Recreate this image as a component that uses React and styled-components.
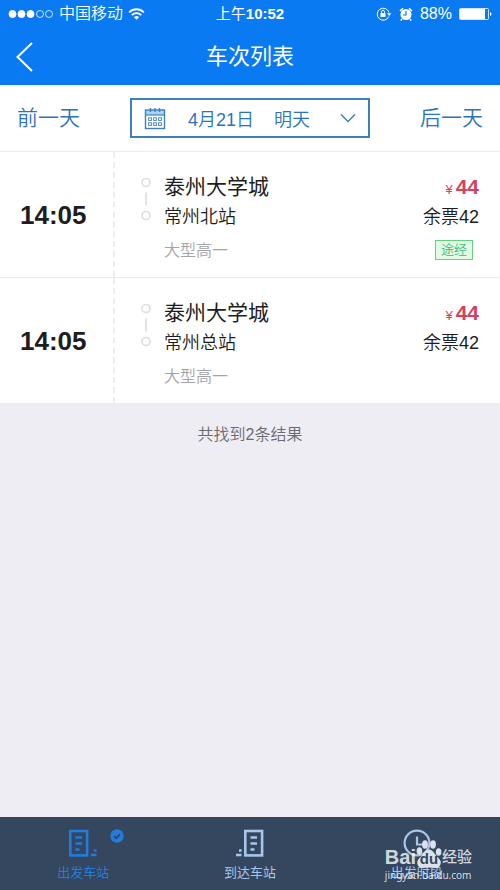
import React, { useState } from "react";
import styled, { createGlobalStyle } from "styled-components";


const GlobalStyle = createGlobalStyle`
    * {
        box-sizing: border-box;
    }
    body {
        margin: 0;
        font-family: "Liberation Sans", "Noto Sans CJK SC", sans-serif;
        font-weight: 350;
        color: #1d1d22;
    }
    button {
        margin: 0;
        padding: 0;
        border: none;
        background: none;
        font: inherit;
        color: inherit;
        cursor: pointer;
    }
    svg {
        display: block;
        flex: none;
    }
`

const Page = styled.div`
    display: flex;
    flex-direction: column;
    min-height: 100vh;
    background-color: #efedf4;
`
const Header = styled.header`
    background-color: #0a7af3;
    color: white;
`
const StatusBar = styled.div`
    display: grid;
    grid-template-columns: 1fr auto 1fr;
    align-items: center;
    height: 28px;
    padding: 0 8px;
    font-size: 16px;
    line-height: 28px;
`
const StatusSide = styled.div`
    display: flex;
    align-items: center;
    justify-content: ${(props) => (props.$right ? "flex-end" : "flex-start")};
    gap: ${(props) => (props.$right ? "7px" : "5px")};
`
const Clock = styled.span`
    font-size: 15px;
    font-weight: 400;
`
const TitleBar = styled.div`
    display: grid;
    grid-template-columns: 50px 1fr 50px;
    align-items: center;
    height: 57px;
`
const BackBtn = styled.button`
    display: flex;
    align-items: center;
    height: 57px;
    padding-left: 16px;
`
const Title = styled.h1`
    margin: 0;
    font-size: 22px;
    font-weight: 400;
    line-height: 57px;
    text-align: center;
`
const DateBar = styled.div`
    display: flex;
    justify-content: space-between;
    align-items: center;
    height: 67px;
    padding: 0 17px;
    background-color: white;
    border-bottom: 1px solid #ebebee;
    color: #2b74b8;
`
const DayBtn = styled.button`
    font-size: 21px;
    line-height: 32px;
`
const DateBtn = styled.button`
    display: flex;
    flex: 1;
    align-items: center;
    height: 40px;
    margin: 0 50px;
    padding: 0 12px;
    border: 2px solid #3d80bd;
    font-size: 18px;
`
const DateText = styled.span`
    display: flex;
    flex: 1;
    gap: 20px;
    padding-left: 22px;
`
const TripList = styled.ul`
    margin: 0;
    padding: 0;
    list-style: none;
`
const TripRow = styled.li`
    display: flex;
    height: 126px;
    background-color: white;
    border-bottom: 1px solid #ebebee;
`
const TimeBox = styled.div`
    display: flex;
    align-items: center;
    width: 115px;
    padding: 2px 0 0 20px;
    border-right: 2px dashed #ededf0;
    font-size: 26px;
    font-weight: 700;
`
const RouteBox = styled.div`
    display: flex;
    flex: 1;
    gap: 12px;
    padding: 20px 0 0 25px;
`
const RouteDots = styled.svg`
    margin-top: 4px;
`
const From = styled.div`
    font-size: 21px;
    font-weight: 400;
    line-height: 30px;
`
const To = styled.div`
    height: 30px;
    font-size: 18px;
    line-height: 30px;
`
const Kind = styled.div`
    margin-top: 9px;
    font-size: 16px;
    line-height: 20px;
    color: #a3a3a8;
`
const PriceBox = styled.div`
    display: flex;
    flex-direction: column;
    align-items: flex-end;
    padding: 20px 21px 0 0;
`
const Price = styled.div`
    height: 30px;
    font-size: 21px;
    font-weight: 700;
    line-height: 30px;
    color: #d6405c;
`
const Yen = styled.span`
    margin-right: 3px;
    font-size: 13px;
    font-weight: 400;
`
const Tag = styled.div`
    margin: 8px 6px 0 0;
    padding: 0 5px;
    border: 1px solid #65cf83;
    background-color: #e3fbe5;
    font-size: 13px;
    line-height: 18px;
    color: #3bb879;
`
const Result = styled.p`
    flex: 1;
    margin: 0;
    padding-top: 21px;
    font-size: 16px;
    line-height: 20px;
    text-align: center;
    color: #6b6a72;
`
const TabBar = styled.nav`
    position: relative;
    display: flex;
    height: 73px;
    background-color: #34475e;
`
const Tab = styled.button`
    display: flex;
    flex: 1;
    flex-direction: column;
    align-items: center;
    padding-top: 12px;
    font-size: 13px;
    font-weight: 400;
    line-height: 20px;
    color: ${(props) => (props.$active ? "#217ce0" : "#a9c5ec")};
`
const TabIcon = styled.span`
    position: relative;
    display: block;
    height: 34px;
`
const Check = styled.svg`
    position: absolute;
    left: 41px;
    top: 0;
`
const Watermark = styled.div`
    position: absolute;
    right: 28px;
    bottom: 9px;
    color: rgba(255, 255, 255, 0.8);
    pointer-events: none;
`
const Brand = styled.div`
    display: flex;
    align-items: flex-end;
    font-size: 20px;
    font-weight: 700;
    line-height: 24px;
`
const BrandCn = styled.span`
    font-size: 15px;
    font-weight: 500;
`
const Site = styled.div`
    font-family: "Noto Sans", sans-serif;
    font-size: 10px;
    font-weight: 400;
    line-height: 12px;
`
const Paw = styled.span`
    position: relative;
    width: 26px;
    height: 30px;
    color: #34475e;
    font-size: 15px;
    line-height: 18px;
`
const PawText = styled.span`
    position: absolute;
    left: 0;
    right: 0;
    bottom: 1px;
    text-align: center;
`

const trips = [
    { id: 1, time: "14:05", from: "泰州大学城", to: "常州北站", kind: "大型高一", price: 44, left: 42, tag: "途经" },
    { id: 2, time: "14:05", from: "泰州大学城", to: "常州总站", kind: "大型高一", price: 44, left: 42 },
]

const SignalIcon = () => (
    <svg width="46" height="10" viewBox="0 0 46 10" fill="white" stroke="white">
        {[4, 13, 22].map((x) => <circle key={x} cx={x + 0.5} cy="5" r="3.5" />)}
        {[32, 41].map((x) => <circle key={x} cx={x} cy="5" r="3.5" fill="none" strokeWidth="0.8" />)}
    </svg>
)

const WifiIcon = () => (
    <svg width="17" height="14" viewBox="0 0 18 14" fill="none" stroke="white" strokeWidth="2">
        <path d="M1.2 5.2a11 11 0 0 1 15.6 0M4 8.2a7 7 0 0 1 10 0" />
        <path d="M9 13.2 6.2 10.4a4 4 0 0 1 5.6 0z" fill="white" stroke="none" />
    </svg>
)

const LockIcon = () => (
    <svg width="16" height="14" viewBox="0 0 16 14" fill="none" stroke="white">
        <path d="M12.8 9.5A6 6 0 1 1 13 5.5" />
        <path d="M11 6.3h4.4L13.2 9z" fill="white" stroke="none" />
        <rect x="4.5" y="6" width="5" height="4" fill="white" stroke="none" />
        <path d="M5.5 6V4.8a1.5 1.5 0 0 1 3 0V6" />
    </svg>
)

const AlarmIcon = () => (
    <svg width="14" height="14" viewBox="0 0 14 14">
        <circle cx="7" cy="7.5" r="5.5" fill="white" />
        <path d="M1 4 4 1.3M13 4l-3-2.7M3 12l-1.2 1.5M11 12l1.2 1.5" stroke="white" strokeWidth="1.6" />
        <path d="M7 4v4H4" fill="none" stroke="#0a7af3" strokeWidth="1.2" />
    </svg>
)

const BatteryIcon = () => (
    <svg width="33" height="14" viewBox="0 0 33 14">
        <rect x="0.5" y="1.5" width="29" height="11" rx="1" fill="none" stroke="white" strokeWidth="0.8" />
        <rect x="1" y="2" width="25" height="10" fill="white" />
        <path d="M31 5v4q1.5-.5 1.5-2T31 5z" fill="white" />
    </svg>
)

const CalendarIcon = () => (
    <svg width="22" height="23" viewBox="0 0 22 23" fill="none" stroke="#3d80bd">
        <rect x="1" y="3" width="20" height="5" fill="#a8d4fa" stroke="none" />
        <rect x="1.5" y="3" width="19" height="18.5" strokeWidth="1.4" />
        <path d="M1 8h20" strokeWidth="1.2" />
        <path d="M6.5 1v4M11 1v4M15.5 1v4" strokeWidth="1.4" />
        {[4.6, 9.6, 14.6].map((x) => [10.8, 15.8].map((y) => (
            <rect key={x + "-" + y} x={x} y={y} width="2.8" height="2.6" strokeWidth="0.9" />
        )))}
    </svg>
)

const StationIcon = ({ flip }) => (
    <svg width="28" height="28" viewBox="0 0 28 28" fill="none" stroke="currentColor" strokeWidth="2.6">
        <g transform={flip ? "translate(8 0)" : undefined}>
            <rect x="1.3" y="2" width="16.8" height="24.4" />
            <path d="M6.5 8.5H13M6.5 14.5H13M6.5 20.5H10.5" strokeWidth="2.4" />
        </g>
        {flip ? (
            <path d="M0 26h5.5M3 21.5h2.6" strokeWidth="2.4" />
        ) : (
            <path d="M22 26h5.5M24.9 21.5h2.6" strokeWidth="2.4" />
        )}
    </svg>
)

const TimeIcon = () => (
    <svg width="28" height="28" viewBox="0 0 28 28" fill="none" stroke="currentColor" strokeWidth="2.2">
        <circle cx="14" cy="14" r="12.4" />
        <path d="M14 7.5v8h6" />
    </svg>
)

const tabs = [
    { name: "出发车站", icon: <StationIcon /> },
    { name: "到达车站", icon: <StationIcon flip /> },
    { name: "出发时段", icon: <TimeIcon /> },
]

const App = () => {
    const [active, setActive] = useState(0)
    return(
    <>
        <GlobalStyle/>
        <Page>
            <Header>
                <StatusBar>
                    <StatusSide>
                        <SignalIcon/>
                        <span>中国移动</span>
                        <WifiIcon/>
                    </StatusSide>
                    <Clock>上午<b>10:52</b></Clock>
                    <StatusSide $right>
                        <LockIcon/>
                        <AlarmIcon/>
                        <span>88%</span>
                        <BatteryIcon/>
                    </StatusSide>
                </StatusBar>
                <TitleBar>
                    <BackBtn aria-label="返回">
                        <svg width="17" height="30" viewBox="0 0 17 30" fill="none" stroke="white" strokeWidth="2">
                            <path d="M16 1 1.5 15 16 29" />
                        </svg>
                    </BackBtn>
                    <Title>车次列表</Title>
                </TitleBar>
            </Header>
            <DateBar>
                <DayBtn>前一天</DayBtn>
                <DateBtn>
                    <CalendarIcon/>
                    <DateText>
                        <span>4月21日</span>
                        <span>明天</span>
                    </DateText>
                    <svg width="16" height="10" viewBox="0 0 16 10" fill="none" stroke="#3d80bd" strokeWidth="1.5">
                        <path d="M1 1.5 8 8.5 15 1.5" />
                    </svg>
                </DateBtn>
                <DayBtn>后一天</DayBtn>
            </DateBar>
            <TripList>
                {trips.map((trip) => (
                    <TripRow key={trip.id}>
                        <TimeBox>{trip.time}</TimeBox>
                        <RouteBox>
                            <RouteDots width="12" height="46" viewBox="0 0 12 46" fill="none" stroke="#dcdce1" strokeWidth="1.6">
                                <circle cx="6" cy="6.5" r="4" />
                                <path d="M6 16.5v13" />
                                <circle cx="6" cy="39.5" r="4" />
                            </RouteDots>
                            <div>
                                <From>{trip.from}</From>
                                <To>{trip.to}</To>
                                <Kind>{trip.kind}</Kind>
                            </div>
                        </RouteBox>
                        <PriceBox>
                            <Price><Yen>¥</Yen>{trip.price}</Price>
                            <To>余票{trip.left}</To>
                            {trip.tag && <Tag>{trip.tag}</Tag>}
                        </PriceBox>
                    </TripRow>
                ))}
            </TripList>
            <Result>共找到{trips.length}条结果</Result>
            <TabBar>
                {tabs.map((tab, n) => (
                    <Tab key={tab.name} $active={active === n} onClick={()=>{setActive(n)}}>
                        <TabIcon>
                            {tab.icon}
                            {active === n && (
                                <Check width="14" height="14" viewBox="0 0 14 14">
                                    <circle cx="7" cy="7" r="6.7" fill="#217ce0" />
                                    <path d="M4 7l2.3 2.3L10 5.2" fill="none" stroke="#34475e" strokeWidth="1.8" />
                                </Check>
                            )}
                        </TabIcon>
                        {tab.name}
                    </Tab>
                ))}
                <Watermark>
                    <Brand>
                        <span>Bai</span>
                        <Paw>
                            <svg width="26" height="30" viewBox="0 0 26 30" fill="#dbe2ea">
                                <ellipse cx="3.4" cy="12" rx="2.8" ry="3.8" />
                                <ellipse cx="9" cy="5.5" rx="2.9" ry="4.2" />
                                <ellipse cx="17" cy="5.5" rx="2.9" ry="4.2" />
                                <ellipse cx="22.6" cy="13" rx="2.8" ry="3.8" />
                                <path d="M13 10.5c-4 0-5 4-8 7s-5 5-3 9 7 2 11 2 9 2 11-2-0-6-3-9-4-7-8-7z" />
                            </svg>
                            <PawText>du</PawText>
                        </Paw>
                        <BrandCn>经验</BrandCn>
                    </Brand>
                    <Site>jingyan.baidu.com</Site>
                </Watermark>
            </TabBar>
        </Page>
    </>
    )
}

export default App;
